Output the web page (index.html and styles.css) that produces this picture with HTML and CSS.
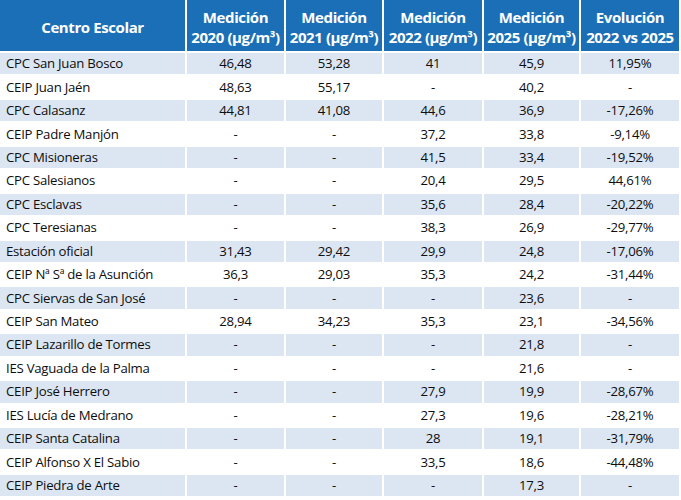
FILE: index.html
```html
<!DOCTYPE html>
<html lang="es">
<head>
<meta charset="utf-8">
<link rel="stylesheet" href="styles.css">
</head>
<body>
<table class="data">
<colgroup>
<col class="c1"><col class="c2"><col class="c3"><col class="c4"><col class="c5"><col class="c6">
</colgroup>
<thead>
<tr>
<th>Centro Escolar</th>
<th>Medición<br>2020 (µg/m³)</th>
<th>Medición<br>2021 (µg/m³)</th>
<th>Medición<br>2022 (µg/m³)</th>
<th>Medición<br>2025 (µg/m³)</th>
<th>Evolución<br>2022 vs 2025</th>
</tr>
</thead>
<tbody>
<tr class="alt"><td>CPC San Juan Bosco</td><td>46,48</td><td>53,28</td><td>41</td><td>45,9</td><td>11,95%</td></tr>
<tr><td>CEIP Juan Jaén</td><td>48,63</td><td>55,17</td><td>-</td><td>40,2</td><td>-</td></tr>
<tr class="alt"><td>CPC Calasanz</td><td>44,81</td><td>41,08</td><td>44,6</td><td>36,9</td><td>-17,26%</td></tr>
<tr><td>CEIP Padre Manjón</td><td>-</td><td>-</td><td>37,2</td><td>33,8</td><td>-9,14%</td></tr>
<tr class="alt"><td>CPC Misioneras</td><td>-</td><td>-</td><td>41,5</td><td>33,4</td><td>-19,52%</td></tr>
<tr><td>CPC Salesianos</td><td>-</td><td>-</td><td>20,4</td><td>29,5</td><td>44,61%</td></tr>
<tr class="alt"><td>CPC Esclavas</td><td>-</td><td>-</td><td>35,6</td><td>28,4</td><td>-20,22%</td></tr>
<tr><td>CPC Teresianas</td><td>-</td><td>-</td><td>38,3</td><td>26,9</td><td>-29,77%</td></tr>
<tr class="alt"><td>Estación oficial</td><td>31,43</td><td>29,42</td><td>29,9</td><td>24,8</td><td>-17,06%</td></tr>
<tr><td>CEIP Nª Sª de la Asunción</td><td>36,3</td><td>29,03</td><td>35,3</td><td>24,2</td><td>-31,44%</td></tr>
<tr class="alt"><td>CPC Siervas de San José</td><td>-</td><td>-</td><td>-</td><td>23,6</td><td>-</td></tr>
<tr><td>CEIP San Mateo</td><td>28,94</td><td>34,23</td><td>35,3</td><td>23,1</td><td>-34,56%</td></tr>
<tr class="alt"><td>CEIP Lazarillo de Tormes</td><td>-</td><td>-</td><td>-</td><td>21,8</td><td>-</td></tr>
<tr><td>IES Vaguada de la Palma</td><td>-</td><td>-</td><td>-</td><td>21,6</td><td>-</td></tr>
<tr class="alt"><td>CEIP José Herrero</td><td>-</td><td>-</td><td>27,9</td><td>19,9</td><td>-28,67%</td></tr>
<tr><td>IES Lucía de Medrano</td><td>-</td><td>-</td><td>27,3</td><td>19,6</td><td>-28,21%</td></tr>
<tr class="alt"><td>CEIP Santa Catalina</td><td>-</td><td>-</td><td>28</td><td>19,1</td><td>-31,79%</td></tr>
<tr><td>CEIP Alfonso X El Sabio</td><td>-</td><td>-</td><td>33,5</td><td>18,6</td><td>-44,48%</td></tr>
<tr class="alt"><td>CEIP Piedra de Arte</td><td>-</td><td>-</td><td>-</td><td>17,3</td><td>-</td></tr>
</tbody>
</table>
</body>
</html>
```
FILE: styles.css
```css
html, body {
  margin: 0;
  padding: 0;
  background: #ffffff;
}
.data {
  border-collapse: separate;
  border-spacing: 0;
  table-layout: fixed;
  width: 679px;
  font-family: "Open Sans", "Noto Sans", sans-serif;
  color: #0d0d0d;
}
.c1 { width: 187px; }
.c2 { width: 99px; }
.c3 { width: 98px; }
.c4 { width: 100px; }
.c5 { width: 97px; }
.c6 { width: 98px; }
.data th,
.data td {
  border-right: 2px solid #ffffff;
  border-bottom: 2px solid #ffffff;
  padding: 0;
  text-align: center;
}
.data th:last-child,
.data td:last-child {
  border-right: 0;
}
.data th {
  background: #1b6fb6;
  color: #ffffff;
  font-weight: 700;
  font-size: 15px;
  line-height: 20px;
  height: 48px;
  padding-top: 3px;
  letter-spacing: -0.4px;
}
.data td {
  font-size: 13.2px;
  height: 21.44px;
  line-height: 17px;
  letter-spacing: -0.25px;
}
.data td:first-child {
  text-align: left;
  padding-left: 6px;
}
.data tr.alt td {
  background: #dce6f3;
}
```
